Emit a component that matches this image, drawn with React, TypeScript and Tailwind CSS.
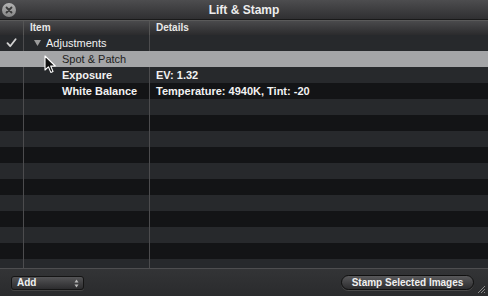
import React from "react";

type Row = {
  checked?: boolean;
  level: number;
  label?: string;
  details?: string;
  bold?: boolean;
  selected?: boolean;
  group?: boolean;
};

const rows: Row[] = [
  { checked: true, level: 0, label: "Adjustments", group: true },
  { level: 1, label: "Spot & Patch", selected: true },
  { level: 1, label: "Exposure", details: "EV: 1.32", bold: true },
  {
    level: 1,
    label: "White Balance",
    details: "Temperature: 4940K, Tint: -20",
    bold: true,
  },
];

const font = { fontFamily: '"Liberation Sans", Arial, sans-serif' };

const Check = () => (
  <svg width="11" height="10" viewBox="0 0 11 10">
    <path
      d="M1.5 5.2 L4.2 8.2 L9.6 1.2"
      fill="none"
      stroke="#d2d2d2"
      strokeWidth="1.8"
      strokeLinecap="round"
      strokeLinejoin="round"
    />
  </svg>
);

const Cursor = () => (
  <svg
    width="13"
    height="19"
    viewBox="0 0 13 19"
    className="absolute left-[44px] top-[55px]"
  >
    <path
      d="M1 1 L1 15 L4.4 11.8 L6.8 17.4 L9 16.4 L6.7 11 L11.3 11 Z"
      fill="#111"
      stroke="#fff"
      strokeWidth="1.1"
      strokeLinejoin="round"
    />
  </svg>
);

export default function App() {
  const filler = Array.from({ length: 11 }, (_, i) => i);

  return (
    <div
      className="relative w-[488px] h-[296px] flex flex-col bg-[#1c1d1f] overflow-hidden select-none"
      style={font}
    >
      {/* title bar */}
      <div className="relative h-[20px] flex items-center justify-center bg-gradient-to-b from-[#4d4d4f] to-[#303032] border-b border-[#1a1a1a]">
        <div className="absolute left-[2px] top-[3px] w-[14px] h-[14px] rounded-full bg-gradient-to-b from-[#b4b4b4] to-[#858585] flex items-center justify-center">
          <svg width="8" height="8" viewBox="0 0 8 8">
            <path
              d="M1.5 1.5 L6.5 6.5 M6.5 1.5 L1.5 6.5"
              stroke="#3a3a3a"
              strokeWidth="1.8"
              strokeLinecap="round"
            />
          </svg>
        </div>
        <span className="text-[12px] font-bold text-[#ececec] leading-none">
          Lift &amp; Stamp
        </span>
      </div>

      {/* header */}
      <div className="h-[15px] flex bg-gradient-to-b from-[#4a4a4c] to-[#2b2b2d] border-t border-[#5a5a5a] text-[10px] font-bold text-[#e8e8e8] leading-[14px]">
        <div className="w-[24px] border-r border-[#555]" />
        <div className="w-[126px] border-r border-[#555] pl-[6px]">Item</div>
        <div className="flex-1 pl-[6px]">Details</div>
      </div>

      {/* list */}
      <div className="flex-1 overflow-hidden">
        {rows.map((r, i) => {
          const bg = r.selected
            ? "bg-[#a4a5a7]"
            : i % 2 === 0
            ? "bg-[#27292c]"
            : "bg-[#131416]";
          return (
            <div
              key={i}
              className={`h-[16px] flex text-[11px] leading-[16px] ${bg} ${
                r.selected ? "text-[#1e1e1e]" : "text-[#f2f2f2]"
              }`}
            >
              <div
                className={`w-[24px] flex items-center justify-center border-r ${
                  r.selected ? "border-[#a4a5a7]" : "border-[#4c4c4e]"
                }`}
              >
                {r.checked && <Check />}
              </div>
              <div
                className={`w-[126px] flex items-center border-r ${
                  r.selected ? "border-[#a4a5a7]" : "border-[#4c4c4e]"
                } ${r.level === 0 ? "pl-[10px]" : "pl-[38px]"}`}
              >
                {r.group && (
                  <svg width="7" height="6" viewBox="0 0 7 6" className="mr-[5px]">
                    <path d="M0 0 L7 0 L3.5 6 Z" fill="#9c9c9c" />
                  </svg>
                )}
                <span className={r.bold ? "font-bold" : ""}>{r.label}</span>
              </div>
              <div className="flex-1 pl-[6px] font-bold">{r.details}</div>
            </div>
          );
        })}
        {filler.map((i) => (
          <div
            key={i}
            className={`h-[16px] flex ${
              i % 2 === 0 ? "bg-[#27292c]" : "bg-[#131416]"
            }`}
          >
            <div className="w-[24px] border-r border-[#4c4c4e]" />
            <div className="w-[126px] border-r border-[#4c4c4e]" />
            <div className="flex-1" />
          </div>
        ))}
      </div>

      {/* bottom bar */}
      <div className="relative h-[28px] flex items-center justify-between px-[11px] bg-gradient-to-b from-[#333436] to-[#2a2b2d] border-t border-[#4e4e50]">
        <div className="w-[73px] h-[14px] mt-[1px] rounded-[3px] border border-[#151515] bg-gradient-to-b from-[#555557] to-[#2c2c2e] flex items-center justify-between pl-[5px] pr-[4px] shadow-[0_1px_0_#444]">
          <span className="text-[10px] font-bold text-[#f0f0f0] leading-none">
            Add
          </span>
          <svg width="5" height="9" viewBox="0 0 5 9">
            <path d="M0.5 3.5 L2.5 0.5 L4.5 3.5 Z" fill="#bbb" />
            <path d="M0.5 5.5 L2.5 8.5 L4.5 5.5 Z" fill="#bbb" />
          </svg>
        </div>
        <div className="w-[133px] h-[15px] mr-[3px] rounded-full border border-[#101010] bg-gradient-to-b from-[#59595b] to-[#2d2d2f] flex items-center justify-center shadow-[0_1px_0_#4a4a4a]">
          <span className="text-[10px] font-bold text-[#f0f0f0] leading-none">
            Stamp Selected Images
          </span>
        </div>
        <svg
          width="10"
          height="10"
          viewBox="0 0 10 10"
          className="absolute right-[2px] bottom-[2px]"
        >
          <path
            d="M9 2 L2 9 M9 5 L5 9 M9 8 L8 9"
            stroke="#8a8a8a"
            strokeWidth="1"
          />
        </svg>
      </div>

      <Cursor />
    </div>
  );
}
